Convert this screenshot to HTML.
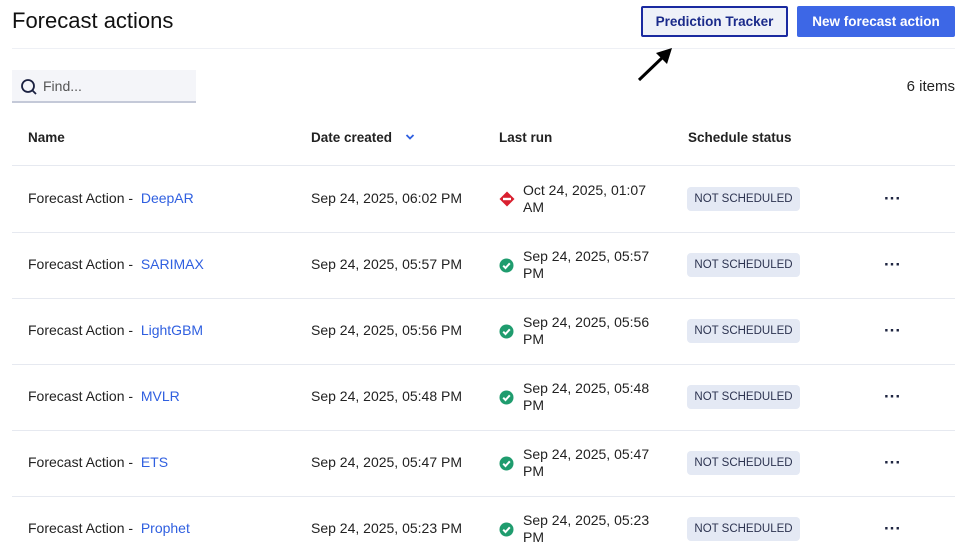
<!DOCTYPE html>
<html><head><style>
*{box-sizing:border-box;margin:0;padding:0}
body{width:968px;height:557px;background:#fff;font-family:"Liberation Sans",sans-serif;color:#1a1a2e;position:relative;overflow:hidden}
.a{position:absolute;white-space:nowrap}
h1{position:absolute;left:12px;top:8px;font-size:22px;font-weight:400;color:#111}
.btn{position:absolute;top:6px;height:31px;font-size:13.5px;font-weight:700;display:flex;align-items:center;justify-content:center;border-radius:2px}
.row{position:absolute;left:12px;width:943px;height:1px;background:#e6e9f0}
.t{font-size:14px;color:#222}
.lnk{color:#2f5fe0}
.badge{position:absolute;left:687px;width:113px;height:24px;background:#e4e9f4;border-radius:4px;font-size:11.5px;color:#2c3350;display:flex;align-items:center;justify-content:center}
.dots{position:absolute;left:884px;font-size:17px;font-weight:700;color:#1e2440}
</style></head><body>
<h1>Forecast actions</h1>
<div class="btn" style="left:641px;width:147px;border:2px solid #1a2aa0;background:#eef1f8;color:#1a2a8a">Prediction Tracker</div>
<div class="btn" style="left:797px;width:158px;background:#3d67e6;color:#fff">New forecast action</div>
<div class="row" style="top:48px;background:#eef0f5"></div>
<svg class="a" style="left:634px;top:44px" width="44" height="40" viewBox="0 0 44 40"><line x1="5" y1="36" x2="30" y2="12" stroke="#000" stroke-width="3"/><polygon points="38,4 22,9 33,20" fill="#000"/></svg>
<div class="a" style="left:12px;top:70px;width:184px;height:33px;background:#f4f5f9;border-bottom:2px solid #c4c9d8"></div>
<svg class="a" style="left:20px;top:78px" width="18" height="18" viewBox="0 0 18 18"><circle cx="8" cy="8" r="6" fill="none" stroke="#1a2040" stroke-width="1.8"/><line x1="12.5" y1="12.5" x2="16" y2="16" stroke="#1a2040" stroke-width="1.8"/></svg>
<div class="a t" style="left:43px;top:78px;color:#555">Find...</div>
<div class="a" style="right:13px;top:78px;font-size:15px;color:#222">6 items</div>
<div class="a t" style="left:28px;top:130px;font-weight:700;font-size:13.5px">Name</div>
<div class="a t" style="left:311px;top:130px;font-weight:700;font-size:13.5px">Date created</div>
<svg class="a" style="left:405px;top:133px" width="10" height="8" viewBox="0 0 10 8"><path d="M1.5 2 L5 5.5 L8.5 2" fill="none" stroke="#2f5fe0" stroke-width="1.8"/></svg>
<div class="a t" style="left:499px;top:130px;font-weight:700;font-size:13.5px">Last run</div>
<div class="a t" style="left:688px;top:130px;font-weight:700;font-size:13.5px">Schedule status</div>
<div class="row" style="top:165px"></div>
<div id="rows"></div>
<script>
var d=[["DeepAR","06:02 PM","Oct 24, 2025, 01:07","AM",1],["SARIMAX","05:57 PM","Sep 24, 2025, 05:57","PM"],["LightGBM","05:56 PM","Sep 24, 2025, 05:56","PM"],["MVLR","05:48 PM","Sep 24, 2025, 05:48","PM"],["ETS","05:47 PM","Sep 24, 2025, 05:47","PM"],["Prophet","05:23 PM","Sep 24, 2025, 05:23","PM"]];
var h="";
d.forEach(function(r,i){var c=199+i*66;
h+='<div class="a t" style="left:28px;top:'+(c-9)+'px">Forecast Action - &nbsp;<span class="lnk">'+r[0]+'</span></div>';
h+='<div class="a t" style="left:311px;top:'+(c-9)+'px">Sep 24, 2025, '+r[1]+'</div>';
h+='<div class="a t" style="left:523px;top:'+(c-17)+'px;line-height:17px">'+r[2]+'<br>'+r[3]+'</div>';
if(r[4])h+='<svg class="a" style="left:499px;top:'+(c-8)+'px" width="16" height="16" viewBox="0 0 16 16"><polygon points="8,0.5 15.5,8 8,15.5 0.5,8" fill="#d9202f"/><rect x="4" y="6.8" width="8" height="2.4" fill="#fff"/></svg>';
else h+='<svg class="a" style="left:499px;top:'+(c-7)+'px" width="15" height="15" viewBox="0 0 15 15"><circle cx="7.5" cy="7.5" r="7" fill="#1f9c6e"/><path d="M4.2 7.7 L6.5 10 L10.8 5.3" fill="none" stroke="#fff" stroke-width="2"/></svg>';
h+='<div class="badge" style="top:'+(c-12)+'px">NOT SCHEDULED</div>';
h+='<div class="dots" style="top:'+(c-10)+'px">&middot;&middot;&middot;</div>';
if(i<5)h+='<div class="row" style="top:'+(c+33)+'px"></div>';
});
document.getElementById("rows").innerHTML=h;
</script>
</body></html>
